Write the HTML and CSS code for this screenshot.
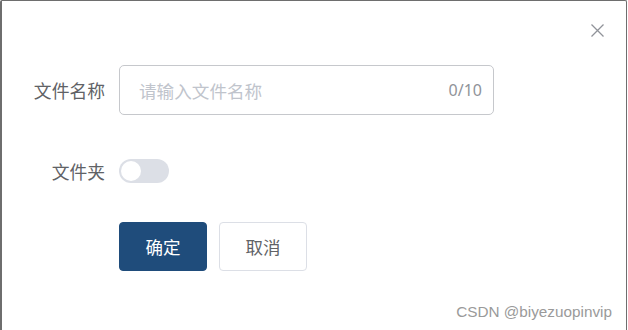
FILE: index.html
```html
<!DOCTYPE html>
<html lang="zh-CN">
<head>
<meta charset="utf-8">
<title>新建文件</title>
<link rel="stylesheet" href="styles.css">
</head>
<body>
<div class="dialog">
  <div class="dialog-header">
    <button class="close" aria-label="关闭">
      <svg width="13" height="13" viewBox="0 0 13 13"><path d="M0.5 0.5L12.5 12.5M12.5 0.5L0.5 12.5" stroke="#909399" stroke-width="1.3" fill="none"/></svg>
    </button>
  </div>
  <form class="form">
    <div class="row row-input">
      <label class="label">文件名称</label>
      <div class="input">
        <span class="placeholder">请输入文件名称</span>
        <span class="count">0/10</span>
      </div>
    </div>
    <div class="row row-switch">
      <label class="label">文件夹</label>
      <span class="switch"><span class="knob"></span></span>
    </div>
    <div class="row row-buttons">
      <span class="label"></span>
      <button type="button" class="btn btn-primary">确定</button>
      <button type="button" class="btn btn-default">取消</button>
    </div>
  </form>
  <div class="watermark">CSDN @biyezuopinvip</div>
</div>
</body>
</html>
```
FILE: styles.css
```css
html, body {
  margin: 0;
  padding: 0;
  background: #ffffff;
}
body {
  font-family: "Noto Sans CJK SC", "Noto Sans", sans-serif;
  width: 628px;
  height: 330px;
  overflow: hidden;
}
.dialog {
  position: relative;
  box-sizing: border-box;
  width: 627px;
  height: 340px;
  border: 1px solid #6e6e6e;
  border-left-width: 2px;
  border-bottom: none;
  border-radius: 2px 2px 0 0;
  background: #fff;
}
.dialog-header {
  display: flex;
  justify-content: flex-end;
  padding: 23px 22px 0 0;
  height: 41px;
  box-sizing: border-box;
}
.close {
  border: none;
  background: none;
  padding: 0;
  width: 13px;
  height: 13px;
  display: flex;
}
.form {
  display: flex;
  flex-direction: column;
}
.row {
  display: flex;
  align-items: center;
}
.label {
  width: 103px;
  flex: none;
  text-align: right;
  font-size: 17.8px;
  color: #606266;
  margin-right: 14px;
}
.row-input {
  margin-top: 23px;
}
.input {
  box-sizing: border-box;
  width: 375px;
  height: 50px;
  border: 1px solid #c6c8cc;
  border-radius: 5px;
  display: flex;
  align-items: center;
  justify-content: space-between;
  padding: 0 11px 0 19px;
}
.placeholder {
  font-size: 17.6px;
  color: #c0c4cc;
}
.count {
  font-size: 16px;
  color: #909399;
  font-family: "Noto Sans", sans-serif;
}
.row-switch {
  margin-top: 43px;
  height: 26px;
}
.switch {
  position: relative;
  width: 50px;
  height: 24px;
  border-radius: 12px;
  background: #dcdfe6;
}
.knob {
  position: absolute;
  left: 2px;
  top: 2px;
  width: 20px;
  height: 20px;
  border-radius: 50%;
  background: #fff;
}
.row-buttons {
  margin-top: 38px;
}
.btn {
  box-sizing: border-box;
  width: 88px;
  height: 49px;
  border-radius: 4px;
  font-family: "Noto Sans CJK SC", sans-serif;
  font-size: 17.5px;
  padding: 0;
}
.btn-primary {
  background: #1f4c7b;
  border: 1px solid #1f4c7b;
  color: #fff;
}
.btn-default {
  margin-left: 12px;
  background: #fff;
  border: 1px solid #dcdfe6;
  color: #606266;
}
.watermark {
  position: absolute;
  right: 14px;
  top: 302px;
  font-family: "Liberation Sans", Arial, sans-serif;
  font-size: 15.3px;
  color: #9a9a9a;
}
```
